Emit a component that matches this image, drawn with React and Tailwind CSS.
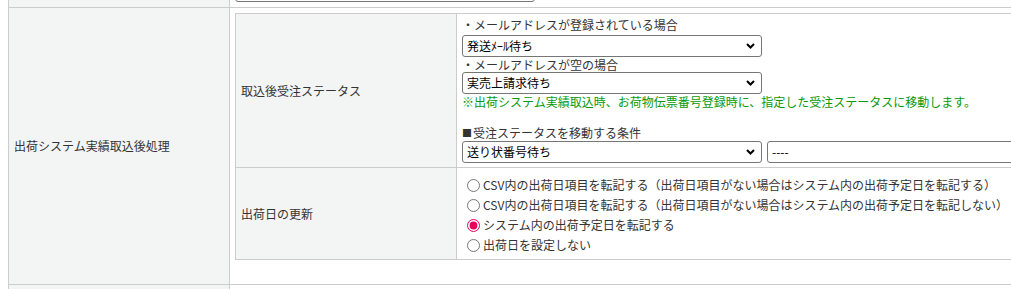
import React from "react";

const Select = ({ value, width = "w-[300px]" }) => {
  return (
    <div
      className={`${width} h-[22px] shrink-0 flex items-center justify-between border border-[#767676] rounded-[3px] bg-white pl-[4px] pr-[6px] text-[12px] leading-[20px] text-black`}
    >
      <span className="whitespace-nowrap">{value}</span>
      <svg width="9" height="6" viewBox="0 0 9 6" className="shrink-0">
        <path d="M1 1 L4.5 4.5 L8 1" fill="none" stroke="#000" strokeWidth="2" />
      </svg>
    </div>
  );
};

const Radio = ({ label, checked }) => {
  return (
    <label className="flex items-center h-[20px] whitespace-nowrap">
      <input
        type="radio"
        name="shipdate"
        defaultChecked={checked}
        className="ml-[5px] mr-[3px] w-[13px] h-[13px] accent-[#e6005c]"
      />
      <span>{label}</span>
    </label>
  );
};

export default function App() {
  return (
    <div
      className="w-[1011px] h-[289px] overflow-hidden bg-white text-[12px] text-[#333]"
      style={{ fontFamily: '"Noto Sans CJK JP", "Noto Sans", sans-serif' }}
    >
      <div className="ml-[8px] mt-[-26px] w-[1400px] border-l border-t border-[#ccc]">
        {/* previous row (cut off) */}
        <div className="flex border-b border-[#ccc]">
          <div className="w-[221px] shrink-0 bg-[#f3f4f4] border-r border-[#ccc]"></div>
          <div className="flex-1 p-[5px]">
            <Select value="" />
          </div>
        </div>

        {/* 出荷システム実績取込後処理 */}
        <div className="flex border-b border-[#ccc] h-[277px]">
          <div className="w-[221px] shrink-0 flex items-center bg-[#f3f4f4] border-r border-[#ccc] px-[5px]">
            出荷システム実績取込後処理
          </div>
          <div className="flex-1 pt-[5px] pl-[5px]">
            <div className="border-l border-t border-b border-[#ccc]">
              <div className="flex h-[154px] border-b border-[#ccc]">
                <div className="w-[221px] shrink-0 flex items-center bg-[#f3f4f4] border-r border-[#ccc] px-[5px]">
                  取込後受注ステータス
                </div>
                <div className="flex-1 px-[5px] pt-[3px] leading-[16px]">
                  <div className="h-[16px]">・メールアドレスが登録されている場合</div>
                  <div className="mt-[2px]">
                    <Select value="発送ﾒｰﾙ待ち" />
                  </div>
                  <div className="h-[15px] leading-[15px]">・メールアドレスが空の場合</div>
                  <Select value="実売上請求待ち" />
                  <div className="h-[16px] text-[#0a990a] whitespace-nowrap">
                    ※出荷システム実績取込時、お荷物伝票番号登録時に、指定した受注ステータスに移動します。
                  </div>
                  <div className="h-[15px]"></div>
                  <div className="h-[16px] flex items-center">
                    <span className="text-[10px] mr-[1px]">■</span>
                    <span>受注ステータスを移動する条件</span>
                  </div>
                  <div className="flex gap-[5px]">
                    <Select value="送り状番号待ち" />
                    <Select value="----" />
                  </div>
                </div>
              </div>
              <div className="flex h-[91px]">
                <div className="w-[221px] shrink-0 flex items-center bg-[#f3f4f4] border-r border-[#ccc] px-[5px]">
                  出荷日の更新
                </div>
                <div className="flex-1 pt-[7px] pl-[5px]">
                  <Radio label="CSV内の出荷日項目を転記する（出荷日項目がない場合はシステム内の出荷予定日を転記する）" />
                  <Radio label="CSV内の出荷日項目を転記する（出荷日項目がない場合はシステム内の出荷予定日を転記しない）" />
                  <Radio label="システム内の出荷予定日を転記する" checked />
                  <Radio label="出荷日を設定しない" />
                </div>
              </div>
            </div>
          </div>
        </div>

        {/* next row (cut off) */}
        <div className="flex h-[30px]">
          <div className="w-[221px] shrink-0 bg-[#f3f4f4] border-r border-[#ccc]"></div>
          <div className="flex-1"></div>
        </div>
      </div>
    </div>
  );
}
